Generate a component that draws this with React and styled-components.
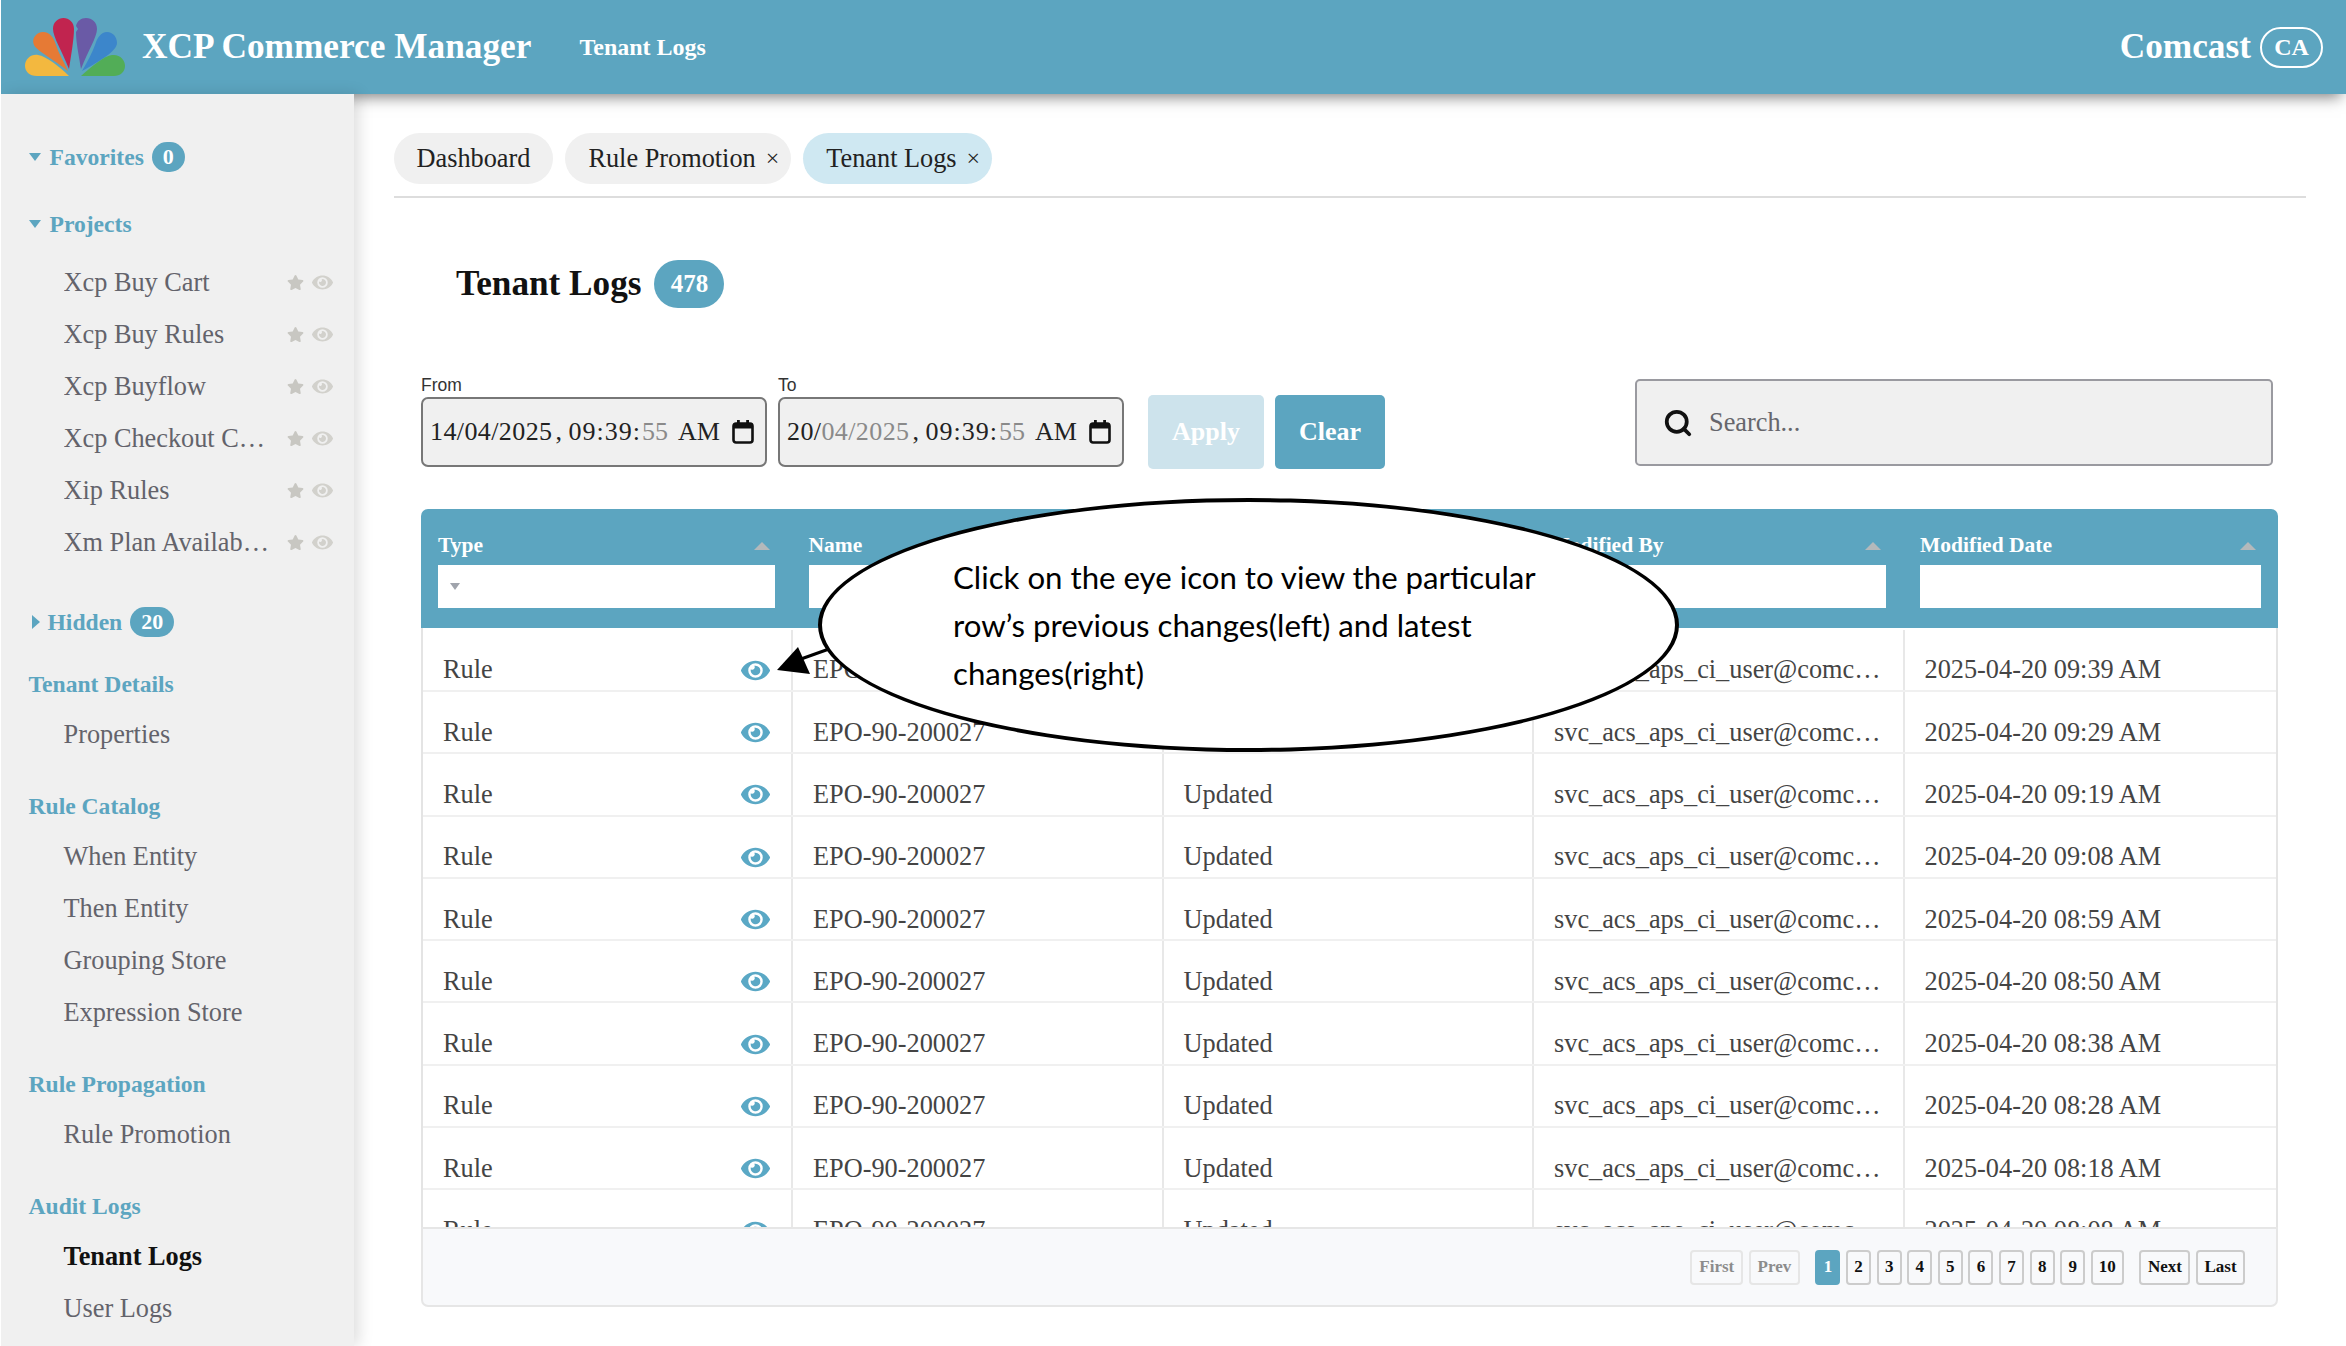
import { createGlobalStyle, styled } from "styled-components";
import { FaEye, FaStar } from "react-icons/fa";
import { Search } from "lucide-react";

const TEAL = "#5ca5c0";

const GlobalStyle = createGlobalStyle`
  html, body {
    margin: 0;
    padding: 0;
    background: #ffffff;
  }
  body {
    font-family: "Liberation Serif", "Times New Roman", serif;
    color: #222222;
    overflow: hidden;
  }
  * {
    box-sizing: border-box;
  }
`;

const Page = styled.div`
  position: relative;
  width: 2345px;
  height: 1346px;
  margin-left: 1px;
  overflow: hidden;
  display: flex;
  flex-direction: column;
`;

const Header = styled.header`
  position: relative;
  z-index: 1;
  flex: none;
  height: 94px;
  padding: 0 23px 0 23px;
  background: ${TEAL};
  color: #ffffff;
  display: flex;
  align-items: center;
  box-shadow: 0 8px 14px -5px rgba(0, 0, 0, 0.5);
`;

const Brand = styled.div`
  margin-left: 15px;
  font-size: 35.3px;
  font-weight: 700;
  white-space: nowrap;
`;

const Crumb = styled.div`
  margin-left: 48px;
  font-size: 24px;
  font-weight: 700;
`;

const Account = styled.div`
  margin-left: auto;
  display: flex;
  align-items: center;
  gap: 9px;
  font-size: 35.3px;
  font-weight: 700;
`;

const Initials = styled.span`
  width: 63px;
  height: 41px;
  border: 2.5px solid #ffffff;
  border-radius: 21px;
  font-size: 24px;
  display: flex;
  align-items: center;
  justify-content: center;
`;

const Body = styled.div`
  flex: 1;
  min-height: 0;
  display: flex;
`;

const Sidebar = styled.aside`
  position: relative;
  z-index: 2;
  flex: none;
  width: 353px;
  padding-top: 46px;
  background: #f0f0f0;
  box-shadow: 5px 0 14px rgba(0, 0, 0, 0.13);
`;

const NavGroup = styled.div`
  margin-top: ${(p) => p.$gap ?? 28}px;
`;

const NavHead = styled.div`
  height: 34px;
  padding-left: 27.5px;
  display: flex;
  align-items: center;
  color: ${TEAL};
  font-size: 23.6px;
  font-weight: 700;
  white-space: nowrap;
`;

const Caret = styled.span`
  width: 0;
  height: 0;
  margin-right: ${(p) => (p.$open ? 9 : 8)}px;
  margin-left: ${(p) => (p.$open ? 0 : 3)}px;
  border-style: solid;
  border-color: transparent;
  ${(p) =>
    p.$open
      ? `border-width: 8px 6.5px 0; border-top-color: ${TEAL};`
      : `border-width: 7.5px 0 7.5px 8px; border-left-color: ${TEAL};`}
`;

const Count = styled.span`
  min-width: 33px;
  height: 30px;
  margin-left: 8px;
  padding: 0 11px;
  border-radius: 16px;
  background: ${TEAL};
  color: #ffffff;
  font-size: 22px;
  display: flex;
  align-items: center;
  justify-content: center;
`;

const NavList = styled.div`
  margin-top: ${(p) => p.$gap ?? 8}px;
`;

const NavItem = styled.div`
  height: 52px;
  padding-left: 62.5px;
  display: flex;
  align-items: center;
  font-size: 26.3px;
  font-weight: ${(p) => (p.$active ? 700 : 400)};
  color: ${(p) => (p.$active ? "#111111" : "#63636b")};
`;

const NavLabel = styled.span`
  width: 208.5px;
  white-space: nowrap;
  overflow: hidden;
  text-overflow: ellipsis;
`;

const NavTools = styled.span`
  margin-left: 15px;
  display: flex;
  align-items: center;
  gap: 8px;
  color: #c8c7c2;
  svg:last-child {
    color: #d2d1cc;
  }
`;

const Main = styled.main`
  flex: 1;
  min-width: 0;
  padding: 39px 40px 0 39.5px;
`;

const Tabs = styled.nav`
  display: flex;
  gap: 12px;
  padding-bottom: 12px;
  border-bottom: 2px solid #dddddd;
`;

const Tab = styled.div`
  height: 51px;
  padding: 0 ${(p) => (p.$closable ? 12 : 23)}px 0 23px;
  border-radius: 26px;
  background: ${(p) => (p.$active ? "#cfe8f2" : "#f0f0f0")};
  display: flex;
  align-items: center;
  gap: 10px;
  font-size: 26.3px;
  color: #222222;
`;

const TabClose = styled.span`
  font-size: 24px;
`;

const TitleRow = styled.div`
  margin-top: 62px;
  padding-left: 62.5px;
  display: flex;
  align-items: center;
  gap: 13px;
`;

const Title = styled.h1`
  margin: 0;
  font-size: 35.2px;
  font-weight: 700;
  color: #111111;
`;

const TitleCount = styled.span`
  width: 70px;
  height: 48px;
  border-radius: 24px;
  background: ${TEAL};
  color: #ffffff;
  font-size: 25px;
  font-weight: 700;
  display: flex;
  align-items: center;
  justify-content: center;
`;

const FilterRow = styled.div`
  margin-top: 67px;
  margin-left: 27.5px;
  margin-right: 28px;
  display: flex;
  align-items: flex-end;
`;

const DateGroup = styled.div`
  width: 346px;
  margin-right: 11px;
  margin-bottom: 2px;
`;

const DateLabel = styled.label`
  display: block;
  margin-bottom: 2px;
  font-family: "Liberation Sans", Arial, sans-serif;
  font-size: 17.5px;
  line-height: 20px;
  color: #333333;
`;

const DateBox = styled.div`
  height: 70px;
  padding: 0 11px 0 7px;
  border: 2.5px solid #777777;
  border-radius: 7px;
  background: #f0f0f0;
  display: flex;
  align-items: center;
  justify-content: space-between;
  font-size: 26px;
  white-space: pre;
`;

const DatePart = styled.span`
  letter-spacing: 0.4px;
`;

const Comma = styled.span`
  margin-left: 3px;
`;

const TimePart = styled.span`
  margin-right: 1px;
  letter-spacing: 1px;
`;

const Meridiem = styled.span`
  margin-left: 10px;
`;

const Muted = styled.span`
  color: #8a8a8a;
`;

const ActionButton = styled.button`
  height: 74px;
  width: ${(p) => p.$width}px;
  margin-left: ${(p) => p.$gap}px;
  border: 0;
  border-radius: 5px;
  background: ${(p) => (p.$disabled ? "#cde3ec" : TEAL)};
  color: #ffffff;
  font-family: inherit;
  font-size: 26px;
  font-weight: 700;
`;

const SearchBox = styled.div`
  width: 638px;
  height: 87px;
  margin-left: auto;
  margin-right: 5px;
  margin-bottom: 3px;
  padding-left: 26px;
  border: 2px solid #9a9aa0;
  border-radius: 5px;
  background: #f0f0f0;
  display: flex;
  align-items: center;
  gap: 16px;
  font-size: 26.3px;
  color: #66666c;
`;

const TableWrap = styled.section`
  margin-top: 40px;
  margin-left: 27.5px;
  margin-right: 28px;
`;

const HeadRow = styled.div`
  height: 119px;
  border-radius: 7px 7px 0 0;
  background: ${TEAL};
  display: grid;
  grid-template-columns: repeat(4, 370.5px) 1fr;
`;

const HeadCell = styled.div`
  padding: 21.5px 17px 0;
`;

const HeadLabel = styled.div`
  height: 30px;
  padding-right: 5px;
  display: flex;
  align-items: center;
  justify-content: space-between;
  color: #ffffff;
  font-size: 21.5px;
  font-weight: 700;
`;

const SortMark = styled.span`
  width: 0;
  height: 0;
  border-style: solid;
  border-width: 0 8px 8px;
  border-color: transparent transparent #b4b9bb;
`;

const FilterInput = styled.div`
  height: 43px;
  margin-top: 4.5px;
  padding-left: 12px;
  background: #ffffff;
  display: flex;
  align-items: center;
`;

const FilterCaret = styled.span`
  width: 0;
  height: 0;
  border-style: solid;
  border-width: 7px 5.5px 0;
  border-color: #a0a4ac transparent transparent;
`;

const Rows = styled.div`
  height: 599px;
  padding-top: 1.7px;
  border-left: 2px solid #e4e4e4;
  border-right: 2px solid #e4e4e4;
  overflow: hidden;
`;

const Row = styled.div`
  height: 62.3px;
  border-bottom: 2px solid #f0f0f0;
  display: grid;
  grid-template-columns: 370px repeat(3, 370.5px) 1fr;
`;

const Cell = styled.div`
  min-width: 0;
  padding: 21px ${(p) => p.$endGap ?? 21}px 0 20px;
  border-right: ${(p) => (p.$last ? "0" : "2px solid #e8e8e8")};
  display: flex;
  align-items: center;
  justify-content: space-between;
  font-size: 26.3px;
  color: #444444;
`;

const CellText = styled.span`
  white-space: nowrap;
  overflow: hidden;
  text-overflow: ellipsis;
`;

const ViewIcon = styled(FaEye)`
  flex: none;
  color: #5aa8c5;
`;

const Pager = styled.div`
  height: 80px;
  padding-right: 31px;
  border: 2px solid #e6e6e6;
  border-radius: 0 0 7px 7px;
  background: #f8f9fb;
  display: flex;
  align-items: center;
  justify-content: flex-end;
  gap: 5.6px;
`;

const PageButton = styled.span`
  height: 35px;
  min-width: ${(p) => p.$width ?? 25}px;
  margin-right: ${(p) => (p.$spaced ? 10 : 0)}px;
  border: 2px solid ${(p) => (p.$active ? TEAL : p.$off ? "#e6e6e6" : "#cccccc")};
  border-radius: 4px;
  background: ${(p) => (p.$active ? TEAL : "transparent")};
  color: ${(p) => (p.$active ? "#ffffff" : p.$off ? "#8c8c8c" : "#111111")};
  font-size: 17px;
  font-weight: 700;
  display: flex;
  align-items: center;
  justify-content: center;
`;

const Callout = styled.div`
  position: absolute;
  z-index: 3;
  left: 817px;
  top: 498px;
  width: 861px;
  height: 254px;
  padding: 0 0 1px 131px;
  border: 4.5px solid #000000;
  border-radius: 50%;
  background: #ffffff;
  display: flex;
  flex-direction: column;
  justify-content: center;
  font-family: Lato, "Open Sans", sans-serif;
  font-size: 31.2px;
  line-height: 48px;
  color: #000000;
  white-space: nowrap;
`;

const CalloutArrow = styled.svg`
  position: absolute;
  z-index: 4;
  left: 770px;
  top: 640px;
`;

const projects = [
  "Xcp Buy Cart",
  "Xcp Buy Rules",
  "Xcp Buyflow",
  "Xcp Checkout Configuration",
  "Xip Rules",
  "Xm Plan Availability",
];

const menus = [
  { title: "Tenant Details", items: ["Properties"] },
  { title: "Rule Catalog", items: ["When Entity", "Then Entity", "Grouping Store", "Expression Store"] },
  { title: "Rule Propagation", items: ["Rule Promotion"] },
  { title: "Audit Logs", items: ["Tenant Logs", "User Logs"], active: "Tenant Logs" },
];

const columns = ["Type", "Name", "Action", "Modified By", "Modified Date"];

const times = ["09:39", "09:29", "09:19", "09:08", "08:59", "08:50", "08:38", "08:28", "08:18", "08:08"];

const Logo = () => (
  <svg width="103" height="61" viewBox="24 16 103 61">
    <path fill="#f3b83f" d="M69 75H37C29 75 25 70 25 65C25 58 31 53 38 54C46 55 60 66 69 75Z" />
    <path fill="#e67a35" d="M68 70C56 60 37 50 34 44C31 37 37 31 43 31C50 31 54 37 56 44C59 53 65 63 68 70Z" />
    <path fill="#c1244f" d="M69 68C62 50 53 36 53 28C53 21 58 17 63.5 17C69 17 74 21 74 28C74 38 71 55 69 68Z" />
    <path fill="#6a5aa6" d="M81 68C79 55 76 42 76 31L78 28L76 25C77 20 81 17 86 17C92 17 97 21 97 28C97 36 88 50 81 68Z" />
    <path fill="#3c86cb" d="M82 70C88 60 92 52 95 44C97 37 101 31 107 31C113 31 117 36 117 42C117 50 100 60 82 70Z" />
    <path fill="#52ad57" d="M81 75C92 65 104 55 112 54C120 53 125 59 125 65C125 71 120 75 114 75Z" />
  </svg>
);

const CalendarIcon = () => (
  <svg width="22" height="26" viewBox="0 0 22 26">
    <rect x="1.5" y="4.5" width="19" height="19" rx="2.5" fill="none" stroke="#111" strokeWidth="2.6" />
    <rect x="1.5" y="4.5" width="19" height="5" fill="#111" />
    <rect x="5" y="1" width="2.8" height="5" fill="#111" />
    <rect x="14.2" y="1" width="2.8" height="5" fill="#111" />
  </svg>
);

const DateField = ({ label, children }) => (
  <DateGroup>
    <DateLabel>{label}</DateLabel>
    <DateBox>
      <span>
        <DatePart>{children}</DatePart>
        <Comma>, </Comma>
        <TimePart>09:39:</TimePart>
        <Muted>55</Muted>
        <Meridiem>AM</Meridiem>
      </span>
      <CalendarIcon />
    </DateBox>
  </DateGroup>
);

const App = () => {
  return (
    <Page>
      <GlobalStyle />
      <Header>
        <Logo />
        <Brand>XCP Commerce Manager</Brand>
        <Crumb>Tenant Logs</Crumb>
        <Account>
          Comcast
          <Initials>CA</Initials>
        </Account>
      </Header>
      <Body>
        <Sidebar>
          <NavHead>
            <Caret $open />
            Favorites
            <Count>0</Count>
          </NavHead>
          <NavGroup $gap={33}>
            <NavHead>
              <Caret $open />
              Projects
            </NavHead>
            <NavList $gap={15.5}>
              {projects.map((name) => (
                <NavItem key={name}>
                  <NavLabel>{name}</NavLabel>
                  <NavTools>
                    <FaStar size={17} />
                    <FaEye size={21} />
                  </NavTools>
                </NavItem>
              ))}
            </NavList>
          </NavGroup>
          <NavGroup $gap={36.5}>
            <NavHead>
              <Caret />
              Hidden
              <Count>20</Count>
            </NavHead>
          </NavGroup>
          {menus.map((menu) => (
            <NavGroup key={menu.title}>
              <NavHead>{menu.title}</NavHead>
              <NavList>
                {menu.items.map((item) => (
                  <NavItem key={item} $active={item === menu.active}>
                    {item}
                  </NavItem>
                ))}
              </NavList>
            </NavGroup>
          ))}
        </Sidebar>
        <Main>
          <Tabs>
            <Tab>Dashboard</Tab>
            <Tab $closable>
              Rule Promotion
              <TabClose>×</TabClose>
            </Tab>
            <Tab $closable $active>
              Tenant Logs
              <TabClose>×</TabClose>
            </Tab>
          </Tabs>
          <TitleRow>
            <Title>Tenant Logs</Title>
            <TitleCount>478</TitleCount>
          </TitleRow>
          <FilterRow>
            <DateField label="From">14/04/2025</DateField>
            <DateField label="To">
              20/<Muted>04/2025</Muted>
            </DateField>
            <ActionButton $disabled $width={116} $gap={13}>
              Apply
            </ActionButton>
            <ActionButton $width={110} $gap={11}>
              Clear
            </ActionButton>
            <SearchBox>
              <Search size={30} strokeWidth={3} color="#111" />
              Search...
            </SearchBox>
          </FilterRow>
          <TableWrap>
            <HeadRow>
              {columns.map((col, i) => (
                <HeadCell key={col}>
                  <HeadLabel>
                    {col}
                    <SortMark />
                  </HeadLabel>
                  <FilterInput>{i === 0 && <FilterCaret />}</FilterInput>
                </HeadCell>
              ))}
            </HeadRow>
            <Rows>
              {times.map((time) => (
                <Row key={time}>
                  <Cell $endGap={21}>
                    Rule
                    <ViewIcon size={29} />
                  </Cell>
                  <Cell>EPO-90-200027</Cell>
                  <Cell>Updated</Cell>
                  <Cell $endGap={14}>
                    <CellText>svc_acs_aps_ci_user@comcast.com</CellText>
                  </Cell>
                  <Cell $last>2025-04-20 {time} AM</Cell>
                </Row>
              ))}
            </Rows>
            <Pager>
              <PageButton $off $width={53}>First</PageButton>
              <PageButton $off $spaced $width={51}>Prev</PageButton>
              <PageButton $active>1</PageButton>
              {[2, 3, 4, 5, 6, 7, 8, 9].map((n) => (
                <PageButton key={n}>{n}</PageButton>
              ))}
              <PageButton $spaced $width={33}>10</PageButton>
              <PageButton $width={51}>Next</PageButton>
              <PageButton $width={49}>Last</PageButton>
            </Pager>
          </TableWrap>
        </Main>
      </Body>
      <CalloutArrow width="60" height="40" viewBox="0 0 60 40">
        <path d="M30 19L58 9" stroke="#000" strokeWidth="3" fill="none" />
        <path d="M6 30L27 7L39 34Z" fill="#000" />
      </CalloutArrow>
      <Callout>
        <span>Click on the eye icon to view the particular</span>
        <span>row’s previous changes(left) and latest</span>
        <span>changes(right)</span>
      </Callout>
    </Page>
  );
};

export default App;
